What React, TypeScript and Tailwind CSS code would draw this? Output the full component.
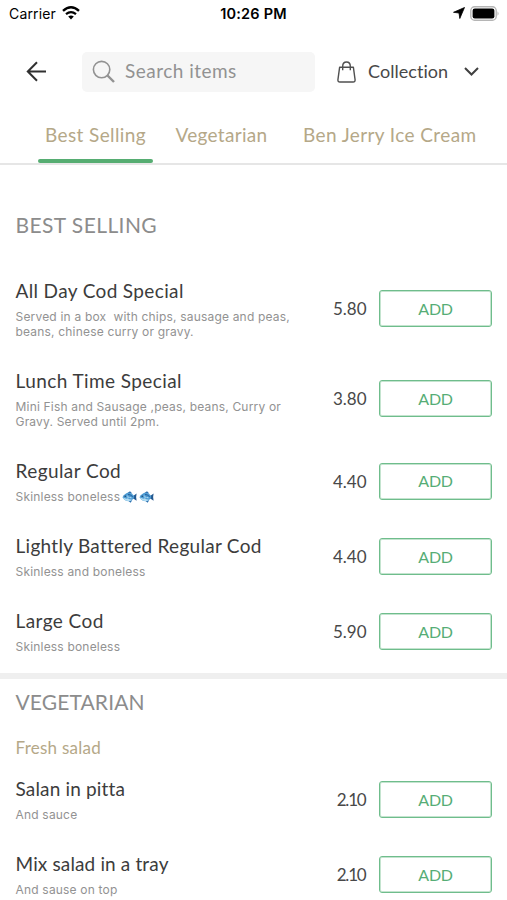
import { clsx } from "clsx";

type MenuItem = {
  name: string;
  nameClass: string;
  description: string[];
  fish?: number;
  price: string;
};

const bestSelling: MenuItem[] = [
  {
    name: "All Day Cod Special",
    nameClass: "tracking-[0.36px]",
    description: ["Served in a box  with chips, sausage and peas,", "beans, chinese curry or gravy."],
    price: "5.80",
  },
  {
    name: "Lunch Time Special",
    nameClass: "tracking-[0.42px]",
    description: ["Mini Fish and Sausage ,peas, beans, Curry or", "Gravy. Served until 2pm."],
    price: "3.80",
  },
  {
    name: "Regular Cod",
    nameClass: "tracking-[0.42px]",
    description: ["Skinless boneless"],
    fish: 2,
    price: "4.40",
  },
  {
    name: "Lightly Battered Regular Cod",
    nameClass: "tracking-[0.28px]",
    description: ["Skinless and boneless"],
    price: "4.40",
  },
  {
    name: "Large Cod",
    nameClass: "tracking-[0.42px]",
    description: ["Skinless boneless"],
    price: "5.90",
  },
];

const vegetarian: MenuItem[] = [
  {
    name: "Salan in pitta",
    nameClass: "tracking-[0.16px]",
    description: ["And sauce"],
    price: "2.10",
  },
  {
    name: "Mix salad in a tray",
    nameClass: "tracking-[0.14px]",
    description: ["And sause on top"],
    price: "2.10",
  },
];

function Fish() {
  return (
    <svg className="ml-[2px] inline-block shrink-0" width="15" height="12" viewBox="0 0 15 12">
      <path d="M5 2.2 8 .3l2.4 2.2zM6 9.6l2.6 2.1 1.6-2.5z" fill="#2c6fae" />
      <path d="M10.5 5.6 14.6 2.4Q13.6 6 14.6 9.8L10.5 7z" fill="#23588f" />
      <path d="M.5 6.2Q3 1.4 7.2 1.7 10.8 2 12.3 6.1 10.5 10 7 10.2 2.5 10.2.5 6.2z" fill="#4d9bd3" />
      <path d="M.7 6.6Q3.5 7.8 7.5 8.3L10 8.7Q8.5 10.2 6.5 10.1 2.5 9.8.7 6.6z" fill="#b4def3" />
      <path d="M6 3.5q3-.3 4.7 2.5" stroke="#275f9b" strokeWidth="1" fill="none" />
      <path d="M5.3 4.6q1.6 1.2.5 3.2M7.5 6.5l2 .3" stroke="#d4effa" strokeWidth=".8" fill="none" />
      <circle cx="3.2" cy="5.3" r=".7" fill="#16395f" />
    </svg>
  );
}

function MenuRow({ item }: { item: MenuItem }) {
  return (
    <div className="flex items-center py-[15px] pr-[15px] pl-[15.5px]">
      <div className="min-w-0 flex-1">
        <h3 className={clsx("text-[19px] leading-6 whitespace-nowrap text-[#3c3c3c]", item.nameClass)}>
          {item.name}
        </h3>
        <div className="mt-[7px] -mb-[0.5px] font-['Inter',sans-serif] text-[12px] leading-[14.7px] tracking-[0.19px] whitespace-pre text-[#929292]">
          {item.description.map((line, i) => (
            <div key={i} className="flex items-center">
              {line}
              {Array.from({ length: item.fish ?? 0 }, (_, n) => (
                <Fish key={n} />
              ))}
            </div>
          ))}
        </div>
      </div>
      <span className={clsx("text-[17px] text-[#484848]", item.price === "2.10" && "tracking-[-1.2px] pr-[1px]")}>
        {item.price}
      </span>
      <button className="ml-[12.5px] h-[37px] w-[113px] rounded-[3px] border border-[#6fbd8c] text-[16px] tracking-[-0.3px] text-[#56ad76] shadow-[inset_0_0_0_1px_#c4e4cf]">
        ADD
      </button>
    </div>
  );
}

function StatusBar() {
  return (
    <div className="grid h-[28px] grid-cols-3 items-center pr-[7px] pl-[9px] font-['Inter',sans-serif] text-black">
      <div className="-mt-[2px] flex items-center gap-[6px]">
        <span className="text-[14px] tracking-[0.15px]">Carrier</span>
        <svg width="18" height="14" viewBox="0 0 18 14" fill="none" stroke="currentColor">
          <path d="M1 4.9Q9-2.3 17 4.9" strokeWidth="2.4" />
          <path d="M4 8.2Q9 3.9 14 8.2" strokeWidth="2.2" />
          <path d="M6.2 10.6Q9 8.2 11.8 10.6L9 13.6z" fill="currentColor" stroke="none" />
        </svg>
      </div>
      <span className="-ml-[2px] text-center text-[14.5px] font-semibold tracking-[0.2px]">10:26 PM</span>
      <div className="-mt-[2px] flex items-center justify-end gap-[5px]">
        <svg width="12" height="12" viewBox="0 0 12 12">
          <path d="M11.5.5 6.8 11.5 6 6 .5 5.3z" fill="currentColor" stroke="currentColor" strokeWidth=".8" strokeLinejoin="round" />
        </svg>
        <svg width="30" height="15" viewBox="0 0 30 15">
          <rect x=".8" y=".8" width="25.4" height="13.4" rx="3.8" fill="#fff" stroke="#b5b5b5" strokeWidth="1.4" />
          <rect x="2.6" y="2.6" width="21.8" height="9.8" rx="2.2" />
          <path d="M27.5 5.2q2.2 2.3 0 4.6z" fill="#b5b5b5" />
        </svg>
      </div>
    </div>
  );
}

export default function App() {
  return (
    <main className="h-[900px] w-[507px] overflow-hidden bg-white font-['Lato',sans-serif]">
      <StatusBar />

      <header className="flex h-[87px] items-center pl-[26px]">
        <svg width="21" height="21" viewBox="0 0 21 21" fill="none" stroke="#303030" strokeWidth="2">
          <path d="M20 10.5H1.8M11 1.2 1.8 10.5 11 19.8" />
        </svg>
        <div className="ml-[35px] flex h-[40px] w-[233px] items-center rounded-[5px] bg-[#f6f6f6] pl-[10px] text-[#929292]">
          <svg width="24" height="24" viewBox="0 0 24 24" fill="none" stroke="currentColor">
            <circle cx="9.6" cy="9.6" r="8.2" strokeWidth="1.6" />
            <path d="m15.5 15.5 6.500 6.500" strokeWidth="2.4" />
          </svg>
          <span className="ml-[9px] text-[19px] tracking-[0.48px]">Search items</span>
        </div>
        <svg className="ml-[22px]" width="19" height="22" viewBox="0 0 19 22" fill="none" stroke="#505050" strokeWidth="1.4" strokeLinejoin="round">
          <path d="M2.6 6.3h13.8l1.7 12.5q.1 2.2-2 2.2H2.9q-2.1 0-2-2.2z" />
          <path d="M5.7 9.2V5.3C5.7-.5 13.3-.5 13.3 5.3v3.9" />
        </svg>
        <span className="ml-[12px] w-[81px] text-[18px] tracking-[0.05px] text-[#484848]">Collection</span>
        <svg className="ml-[15px]" width="15" height="9" viewBox="0 0 15 9" fill="none" stroke="#404040" strokeWidth="2">
          <path d="m1 1 6.500 6.500L14 1" />
        </svg>
      </header>

      <nav className="flex h-[50px] border-b-2 border-[#e6e6e6] pl-[38px] text-[19px] text-[#b5a888]">
        <div className="flex w-[115px] flex-col items-center justify-between">
          <span className="leading-[40px] tracking-[0.38px] whitespace-nowrap">Best Selling</span>
          <div className="h-[4px] w-full rounded-[2px] bg-[#56ad72]" />
        </div>
        <span className="ml-[22.5px] w-[127.5px] leading-[40px] tracking-[0.3px]">Vegetarian</span>
        <span className="leading-[40px] tracking-[0.4px] whitespace-nowrap">Ben Jerry Ice Cream</span>
      </nav>

      <section className="h-[508px]">
        <h2 className="h-[99px] pt-[45px] pl-[15.5px] text-[21px] leading-[30px] tracking-[0.42px] text-[#8c8c8c]">
          BEST SELLING
        </h2>
        {bestSelling.map((item) => (
          <MenuRow key={item.name} item={item} />
        ))}
      </section>

      <div className="h-[6px] bg-[#efefef]" />

      <section>
        <h2 className="h-[54px] pt-[8px] pl-[15.5px] text-[21px] leading-[30px] tracking-[0.12px] text-[#8c8c8c]">
          VEGETARIAN
        </h2>
        <p className="h-[29px] pl-[15.5px] text-[17px] leading-[30px] tracking-[0.25px] text-[#b5a888]">Fresh salad</p>
        {vegetarian.map((item) => (
          <MenuRow key={item.name} item={item} />
        ))}
      </section>
    </main>
  );
}
